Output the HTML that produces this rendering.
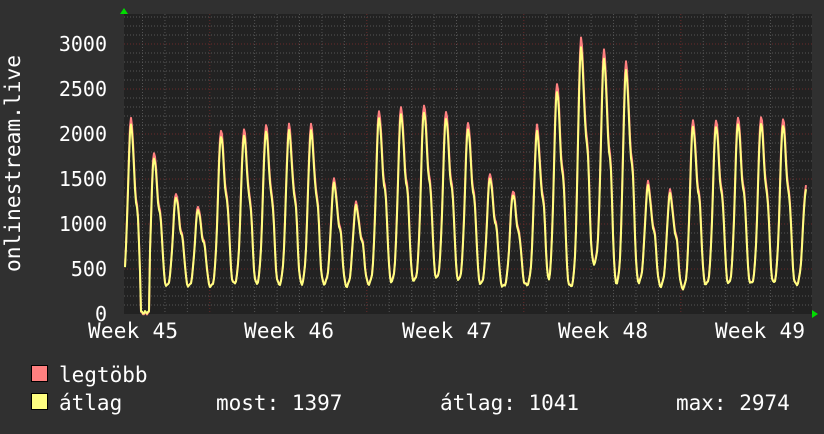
<!DOCTYPE html>
<html><head><meta charset="utf-8"><style>
html,body{margin:0;padding:0;background:#303030;}
body{width:824px;height:430px;overflow:hidden;position:relative;font-family:"DejaVu Sans Mono","Liberation Mono",monospace;color:#fff;}
svg text{font-family:"DejaVu Sans Mono","Liberation Mono",monospace;fill:#fff;}
</style></head><body>
<svg id="g" width="824" height="430" xmlns="http://www.w3.org/2000/svg">
<rect width="824" height="430" fill="#303030"/>
<rect x="124" y="14" width="688" height="300" fill="#222222"/>
<g id="grid"></g>
<g id="lines" fill="none" stroke-width="2" stroke-linejoin="round"></g>
<polygon points="120,14 124,8 128,14" fill="#00dd00"/>
<polygon points="812,310 818,314 812,318" fill="#00dd00"/>
<g font-size="20" text-anchor="end">
<text x="107" y="321">0</text>
<text x="107" y="276">500</text>
<text x="107" y="231">1000</text>
<text x="107" y="186">1500</text>
<text x="107" y="141">2000</text>
<text x="107" y="96">2500</text>
<text x="107" y="51">3000</text>
</g>
<text font-size="21" textLength="217" lengthAdjust="spacingAndGlyphs" transform="translate(20,272) rotate(-90)">onlinestream.live</text>
<g font-size="21">
<text x="88" y="338" textLength="90">Week 45</text>
<text x="244" y="338" textLength="90">Week 46</text>
<text x="402" y="338" textLength="90">Week 47</text>
<text x="558" y="338" textLength="90">Week 48</text>
<text x="715" y="338" textLength="90">Week 49</text>
</g>
<rect x="31.5" y="365.5" width="16" height="16" fill="#ff8080" stroke="#000"/>
<rect x="31.5" y="393.5" width="16" height="16" fill="#ffff80" stroke="#000"/>
<g font-size="21">
<text x="59" y="382">legtöbb</text>
<text x="59" y="410">átlag</text>
<text x="216" y="410">most: 1397</text>
<text x="440" y="410">átlag: 1041</text>
<text x="676" y="410">max: 2974</text>
</g>
</svg>
<script>
var NS="http://www.w3.org/2000/svg";
function el(p,t,a){var e=document.createElementNS(NS,t);for(var k in a)e.setAttribute(k,a[k]);p.appendChild(e);return e;}
var grid=document.getElementById('grid');
for(var v=100;v<=3300;v+=100){var y=314-v*0.09;if(y<14)break;
 el(grid,'line',{x1:124,x2:812,y1:y,y2:y,stroke:v%500==0?'#6a2a2a':'#555',"stroke-dasharray":"1,2","stroke-width":1});}
for(var x=142.5;x<812;x+=22.43){var m=((x-210)/157)%1;if(m<0)m+=1;var maj=m<0.05||m>0.95;
 el(grid,'line',{x1:x,x2:x,y1:14,y2:314,stroke:maj?'#6a2a2a':'#555',"stroke-dasharray":"1,2","stroke-width":1});}
var peaks=[[131,2100],[154,1740],[176,1300],[198,1160],[221,1980],[244,1980],[266,2030],[289,2030],[311,2030],[334,1450],[356,1200],[379,2180],[401,2220],[424,2250],[446,2180],[468,2060],[490,1510],[513,1330],[537,2020],[557,2480],[581,2950],[604,2830],[626,2700],[648,1420],[670,1330],[693,2080],[716,2090],[738,2120],[761,2120],[783,2100],[806,1380]];
var tr=[300,0,300,300,300,330,320,320,320,330,300,330,340,360,380,360,320,300,320,330,300,550,320,340,300,280,320,320,330,330,320,320];
function val(x){
 var base=300;
 for(var i=0;i<peaks.length-1;i++){if(x>=peaks[i][0]&&x<peaks[i+1][0]){base=tr[i+1];}}
 var r=base;
 for(var i=0;i<peaks.length;i++){var px=peaks[i][0],pv=peaks[i][1];var d=x-px;var w=d<0?4.2:5.5;
  var f=Math.exp(-Math.pow(Math.abs(d)/w,2));var sh=d>0?0.3*Math.exp(-Math.pow((d-7)/2.5,2)):0;
  r=Math.max(r,base+(pv-base)*Math.min(1,f+sh));}
 if(x>=141&&x<=149)r=Math.min(r,20);
 return r;}
var L=document.getElementById('lines');
var dr="",dy="";
for(var x=125;x<=806;x+=1){var v=val(x);var n=Math.sin(x*1.7)*15;
 var ya=314-(v+n)*0.09, yr=314-(v+(v-250)*0.04+n)*0.09;
 dy+=(x==125?"M":"L")+x+","+ya.toFixed(1);
 dr+=(x==125?"M":"L")+x+","+yr.toFixed(1);}
el(L,'path',{d:dr,stroke:'#ff8080'});
el(L,'path',{d:dy,stroke:'#ffff80'});
</script>
</body></html>
